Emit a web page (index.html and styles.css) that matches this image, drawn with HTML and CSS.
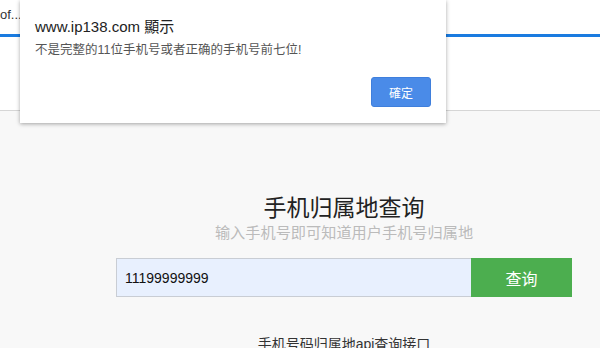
FILE: index.html
```html
<!DOCTYPE html>
<html lang="zh">
<head>
<meta charset="utf-8">
<title>手机归属地查询</title>
<link rel="stylesheet" href="styles.css">
</head>
<body>
<header class="header">
  <div class="topbar"><span class="tab-title">of...</span></div>
</header>
<main class="main">
  <div class="search">
    <h1 class="title">手机归属地查询</h1>
    <p class="subtitle">输入手机号即可知道用户手机号归属地</p>
    <form class="form">
      <input class="phone" type="text" value="11199999999">
      <button class="submit" type="button">查询</button>
    </form>
    <p class="api-link">手机号码归属地api查询接口</p>
  </div>
</main>
<div class="dialog">
  <div class="dialog-title">www.ip138.com 顯示</div>
  <div class="dialog-msg">不是完整的11位手机号或者正确的手机号前七位!</div>
  <div class="dialog-actions"><button class="dialog-ok" type="button">確定</button></div>
</div>
</body>
</html>
```
FILE: styles.css
```css
* { box-sizing: border-box; }
html, body { margin: 0; padding: 0; }
body {
  width: 600px;
  height: 348px;
  overflow: hidden;
  background: #f8f8f8;
  font-family: "Liberation Sans", "Noto Sans CJK SC", sans-serif;
  color: #333;
}
.header {
  height: 111px;
  background: #fff;
  border-bottom: 1px solid #d6d6d6;
}
.topbar {
  height: 37px;
  border-bottom: 3px solid #1a7be0;
  padding: 7px 0 0 0;
  font-size: 13px;
  color: #333;
}
.tab-title { display: block; line-height: 16px; }
.main {
  padding-top: 82px;
}
.search {
  width: 456px;
  margin-left: 116px;
  display: flex;
  flex-direction: column;
  align-items: center;
}
.title {
  margin: 0;
  font-size: 23px;
  font-weight: normal;
  line-height: 30px;
  color: #222;
}
.subtitle {
  margin: 0;
  font-size: 15.2px;
  line-height: 20px;
  color: #bbb;
}
.form {
  margin: 15px 0 0 0;
  display: flex;
  width: 100%;
  height: 39px;
}
.phone {
  flex: 1;
  height: 39px;
  margin: 0;
  border: 1px solid #c9cdd4;
  border-right: none;
  background: #e8f0fe;
  padding: 0 8px;
  font-family: "Liberation Sans", sans-serif;
  font-size: 14px;
  color: #111;
}
.submit {
  width: 101px;
  height: 39px;
  margin: 0;
  border: none;
  background: #4cae4f;
  color: #fff;
  font-family: "Liberation Sans", "Noto Sans CJK SC", sans-serif;
  font-size: 16px;
}
.api-link {
  margin: 38px 0 0 0;
  font-size: 14px;
  line-height: 18px;
  color: #333;
}
.dialog {
  position: absolute;
  left: 20px;
  top: 0;
  width: 426px;
  height: 123px;
  background: #fff;
  box-shadow: 0 1px 4px rgba(0,0,0,0.35);
  padding: 17px 15px 0 15px;
}
.dialog-title {
  font-size: 15px;
  line-height: 20px;
  color: #222;
}
.dialog-msg {
  margin-top: 5px;
  font-size: 12.5px;
  line-height: 16px;
  color: #555;
}
.dialog-actions {
  display: flex;
  justify-content: flex-end;
  margin-top: 19px;
}
.dialog-ok {
  width: 60px;
  height: 30px;
  border: 1px solid #3f7fdc;
  border-radius: 3px;
  background: #4a8be8;
  color: #fff;
  font-family: "Liberation Sans", "Noto Sans CJK SC", sans-serif;
  font-size: 12px;
  margin-right: 0;
}
```
